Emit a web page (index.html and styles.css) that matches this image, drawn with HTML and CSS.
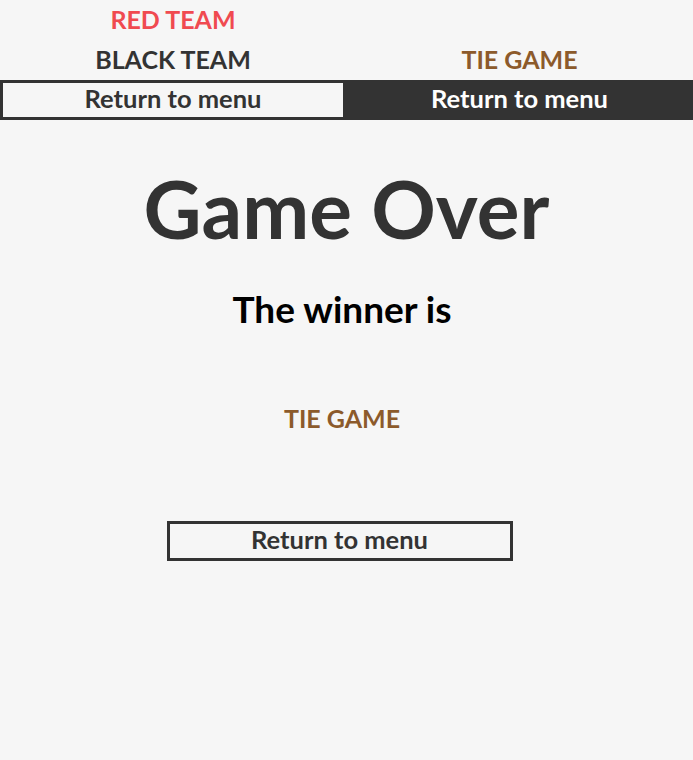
FILE: index.html
```html
<!DOCTYPE html>
<html>
<head>
<meta charset="utf-8">
<link rel="stylesheet" href="styles.css">
</head>
<body>
<div class="teams">
  <div class="team-col">
    <div class="label red">RED TEAM</div>
    <div class="label black">BLACK TEAM</div>
    <button class="btn btn-outline">Return to menu</button>
  </div>
  <div class="team-col">
    <div class="label tie">TIE GAME</div>
    <button class="btn btn-dark">Return to menu</button>
  </div>
</div>
<main class="result">
  <h1 class="title">Game Over</h1>
  <h2 class="subtitle">The winner is</h2>
  <div class="winner tie">TIE GAME</div>
  <button class="btn btn-outline btn-main">Return to menu</button>
</main>
</body>
</html>
```

FILE: styles.css
```css
html, body {
  margin: 0;
  padding: 0;
  background: #f6f6f6;
  font-family: "Lato", "Open Sans", sans-serif;
  color: #333;
}
.teams {
  display: grid;
  grid-template-columns: 346px 347px;
}
.team-col {
  display: flex;
  flex-direction: column;
  justify-content: flex-end;
  align-items: stretch;
}
.label {
  height: 40px;
  line-height: 38px;
  text-align: center;
  font-size: 25px;
  font-weight: 700;
}
.red { color: #f04a50; }
.black { color: #333; }
.tie { color: #8c5a2b; }
.btn {
  display: block;
  box-sizing: border-box;
  height: 40px;
  margin: 0;
  padding: 0 0 4px;
  font-family: inherit;
  font-size: 25.5px;
  font-weight: 700;
  line-height: 30px;
  cursor: pointer;
}
.btn-outline {
  background: #f6f6f6;
  border: 3px solid #333;
  color: #333;
}
.btn-dark {
  background: #333;
  border: 3px solid #333;
  color: #fff;
}
.result {
  display: flex;
  flex-direction: column;
  align-items: center;
}
.title {
  margin: 43px 0 0;
  font-size: 80px;
  font-weight: 700;
  line-height: 90px;
  color: #333;
}
.subtitle {
  margin: 34px 0 0 -9px;
  font-size: 37px;
  font-weight: 700;
  line-height: 44px;
  color: #000;
}
.winner {
  margin-top: 75px;
  margin-left: -9px;
  font-size: 25px;
  font-weight: 700;
  line-height: 24px;
}
.btn-main {
  width: 346px;
  margin-top: 91px;
  margin-left: -14px;
}
```
